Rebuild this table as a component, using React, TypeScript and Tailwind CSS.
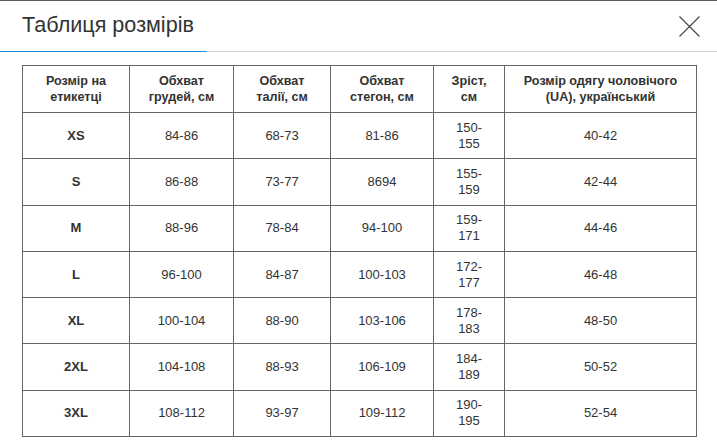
import React from "react";

const rows: string[][] = [
  ["XS", "84-86", "68-73", "81-86", "150-\n155", "40-42"],
  ["S", "86-88", "73-77", "8694", "155-\n159", "42-44"],
  ["M", "88-96", "78-84", "94-100", "159-\n171", "44-46"],
  ["L", "96-100", "84-87", "100-103", "172-\n177", "46-48"],
  ["XL", "100-104", "88-90", "103-106", "178-\n183", "48-50"],
  ["2XL", "104-108", "88-93", "106-109", "184-\n189", "50-52"],
  ["3XL", "108-112", "93-97", "109-112", "190-\n195", "52-54"],
];

const widths = ["w-[107px]", "w-[104px]", "w-[97px]", "w-[103px]", "w-[71px]", "w-[192px]"];

export default function App() {
  return (
    <div
      className="w-[717px] h-[447px] bg-white border-t border-[#5e5e5e] overflow-hidden"
      style={{ fontFamily: '"Liberation Sans", Arial, sans-serif' }}
    >
      <div className="flex items-end h-[51px] border-b border-[#cfcfcf] relative">
        <div className="h-[51px] pl-[22px] pr-[14px] border-b border-[#1e8fd8] mb-[-1px] w-[207px] flex items-center">
          <span className="text-[21.6px] leading-none text-[#333] whitespace-nowrap mt-[-2px]">Таблиця розмірів</span>
        </div>
        <button className="absolute right-[17px] top-[15px] w-[21px] h-[21px] text-[#444]">
          <svg viewBox="0 0 21 21" width="21" height="21">
            <path d="M0.5 0.5 L20.5 20.5 M20.5 0.5 L0.5 20.5" stroke="#444" strokeWidth="1.1" fill="none" />
          </svg>
        </button>
      </div>
      <div className="pl-[22px] pt-[13px]">
        <table className="border-collapse text-[13px] leading-[16px] text-[#333] text-center">
          <thead>
            <tr className="h-[47px]">
              {[
                "Розмір на\nетикетці",
                "Обхват\nгрудей, см",
                "Обхват\nталії, см",
                "Обхват\nстегон, см",
                "Зріст,\nсм",
                "Розмір одягу чоловічого\n(UA), український",
              ].map((h, i) => (
                <th
                  key={i}
                  className={`${widths[i]} border border-[#666] font-bold text-[12.6px] whitespace-pre-line p-0 align-middle`}
                >
                  {h}
                </th>
              ))}
            </tr>
          </thead>
          <tbody>
            {rows.map((r, ri) => (
              <tr key={ri} className="h-[46.3px]">
                {r.map((c, ci) => (
                  <td
                    key={ci}
                    className={`border border-[#666] p-0 align-middle whitespace-pre-line ${ci === 0 ? "font-bold" : ""}`}
                  >
                    {c}
                  </td>
                ))}
              </tr>
            ))}
          </tbody>
        </table>
      </div>
    </div>
  );
}
